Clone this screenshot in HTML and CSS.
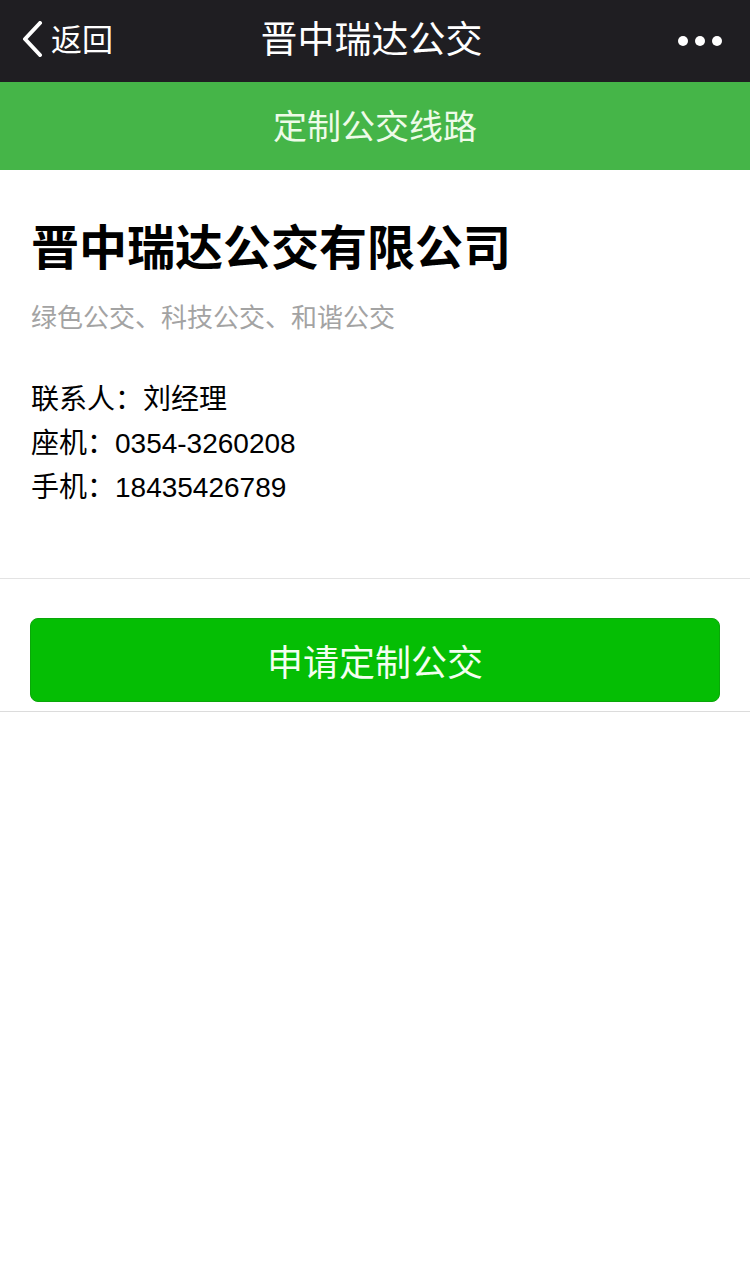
FILE: index.html
```html
<!DOCTYPE html>
<html lang="zh-CN">
<head>
  <meta charset="UTF-8">
  <meta name="viewport" content="width=device-width, initial-scale=1.0">
  <title>晋中瑞达公交</title>
  <link rel="stylesheet" href="styles.css">
</head>
<body>

<!-- Barra superior -->
<div class="top-bar">
  <div class="back">
    <svg class="back-icon" width="22" height="36" viewBox="0 0 22 36">
      <polyline points="19,2 4,18 19,34" fill="none" stroke="#fff" stroke-width="4" stroke-linecap="round" stroke-linejoin="round"/>
    </svg>
    <span>返回</span>
  </div>
  <div class="top-title">晋中瑞达公交</div>
  <div class="more">
    <span class="dot"></span><span class="dot"></span><span class="dot"></span>
  </div>
</div>

<div class="green-bar">定制公交线路</div>

<div class="info">
  <h1 class="company">晋中瑞达公交有限公司</h1>
  <p class="slogan">绿色公交、科技公交、和谐公交</p>
  <div class="contact">
    <p>联系人：刘经理</p>
    <p>座机：0354-3260208</p>
    <p>手机：18435426789</p>
  </div>
</div>

<div class="button-area">
  <button class="apply-button">申请定制公交</button>
</div>

</body>
</html>
```

FILE: styles.css
```css
body {
  margin: 0;
  background-color: #fff;
  font-family: "Noto Sans CJK SC", "Noto Sans", sans-serif;
  color: #000;
}
/* Barra preta do topo */
.top-bar {
  height: 82px;
  box-sizing: border-box;
  padding-bottom: 8px;
  background-color: #1f1e22;
  color: #fff;
  display: flex;
  align-items: center;
}
.back {
  display: flex;
  align-items: center;
  padding-left: 21px;
  font-size: 31px;
  gap: 8px;
  flex: 1;
}
.back-icon {
  display: block;
  margin-top: 4px;
}
.top-title {
  font-size: 37px;
  text-align: center;
  flex: 0 0 auto;
}
.more {
  flex: 1;
  display: flex;
  justify-content: flex-end;
  gap: 7px;
  padding-right: 28px;
  padding-top: 8px;
}
.dot {
  width: 10px;
  height: 10px;
  border-radius: 50%;
  background-color: #fff;
}
/* Faixa verde */
.green-bar {
  height: 88px;
  box-sizing: border-box;
  padding-bottom: 3px;
  background-color: #45b548;
  color: #eefbe8;
  font-size: 34px;
  display: flex;
  align-items: center;
  justify-content: center;
}
.info {
  padding: 34px 31px 68px;
  border-bottom: 1px solid #e3e3e3;
}
.company {
  margin: 0;
  font-size: 48px;
  font-weight: bold;
  line-height: 80px;
}
.slogan {
  margin: 0;
  margin-top: 12px;
  font-size: 26px;
  color: #a3a3a3;
  line-height: 40px;
}
.contact {
  margin-top: 42px;
  font-family: "Liberation Sans", "Noto Sans CJK SC", sans-serif;
}
.contact p {
  margin: 0;
  font-size: 28px;
  line-height: 44px;
}
/* Botão verde */
.button-area {
  padding: 39px 30px 9px;
  border-bottom: 1px solid #dcdcdc;
}
.apply-button {
  display: block;
  width: 100%;
  height: 84px;
  border: 1px solid #0aa709;
  border-radius: 8px;
  background-color: #05be04;
  color: #f3fff0;
  font-family: "Noto Sans CJK SC", "Noto Sans", sans-serif;
  font-size: 36px;
  cursor: pointer;
}
```
